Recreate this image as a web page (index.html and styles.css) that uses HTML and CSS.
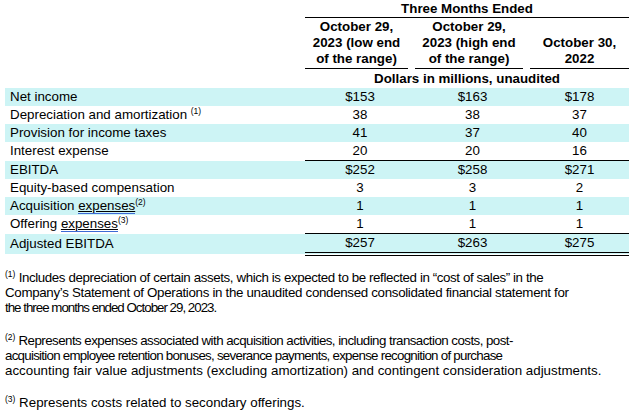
FILE: index.html
```html
<!DOCTYPE html>
<html>
<head>
<meta charset="utf-8">
<link rel="stylesheet" href="styles.css">
</head>
<body>
<table class="fin">
  <colgroup>
    <col class="w-label">
    <col class="w-c1">
    <col class="w-gap">
    <col class="w-c2">
    <col class="w-gap">
    <col class="w-c3">
  </colgroup>
  <thead>
    <tr class="h-top">
      <td></td>
      <th colspan="5" class="ruled">Three Months Ended</th>
    </tr>
    <tr class="h-cols">
      <td></td>
      <th class="ruled">October 29,<br>2023 (low end<br>of the range)</th>
      <td></td>
      <th class="ruled">October 29,<br>2023 (high end<br>of the range)</th>
      <td></td>
      <th class="ruled">October 30,<br>2022</th>
    </tr>
    <tr class="h-unit">
      <td></td>
      <th colspan="5">Dollars in millions, unaudited</th>
    </tr>
  </thead>
  <tbody>
    <tr class="shade">
      <td class="lbl">Net income</td>
      <td colspan="2" class="num">$153</td>
      <td colspan="2" class="num">$163</td>
      <td class="num">$178</td>
    </tr>
    <tr>
      <td class="lbl">Depreciation and amortization <sup class="fn">(1)</sup></td>
      <td colspan="2" class="num">38</td>
      <td colspan="2" class="num">38</td>
      <td class="num">37</td>
    </tr>
    <tr class="shade">
      <td class="lbl">Provision for income taxes</td>
      <td colspan="2" class="num">41</td>
      <td colspan="2" class="num">37</td>
      <td class="num">40</td>
    </tr>
    <tr class="sub-rule">
      <td class="lbl">Interest expense</td>
      <td colspan="2" class="num">20</td>
      <td colspan="2" class="num">20</td>
      <td class="num">16</td>
    </tr>
    <tr class="shade">
      <td class="lbl">EBITDA</td>
      <td colspan="2" class="num">$252</td>
      <td colspan="2" class="num">$258</td>
      <td class="num">$271</td>
    </tr>
    <tr>
      <td class="lbl">Equity-based compensation</td>
      <td colspan="2" class="num">3</td>
      <td colspan="2" class="num">3</td>
      <td class="num">2</td>
    </tr>
    <tr class="shade">
      <td class="lbl">Acquisition <span class="flag">expenses</span><sup class="fn">(2)</sup></td>
      <td colspan="2" class="num">1</td>
      <td colspan="2" class="num">1</td>
      <td class="num">1</td>
    </tr>
    <tr class="sub-rule">
      <td class="lbl">Offering <span class="flag">expenses</span><sup class="fn">(3)</sup></td>
      <td colspan="2" class="num">1</td>
      <td colspan="2" class="num">1</td>
      <td class="num">1</td>
    </tr>
    <tr class="shade total">
      <td class="lbl">Adjusted EBITDA</td>
      <td colspan="2" class="num">$257</td>
      <td colspan="2" class="num">$263</td>
      <td class="num">$275</td>
    </tr>
  </tbody>
</table>

<div class="notes">
  <p class="note-1"><span class="ls-1a"><sup class="nfn">(1)</sup> Includes depreciation of certain assets, which is expected to be reflected in “cost of sales” in the</span><br><span class="ls-1b">Company’s Statement of Operations in the unaudited condensed consolidated financial statement for</span><br><span class="ls-1c">the three months ended October 29, 2023.</span></p>
  <p class="note-2"><span class="ls-2a"><sup class="nfn">(2)</sup> Represents expenses associated with acquisition activities, including transaction costs, post-</span><br><span class="ls-2b">acquisition employee retention bonuses, severance payments, expense recognition of purchase</span><br>accounting fair value adjustments (excluding amortization) and contingent consideration adjustments.</p>
  <p class="note-3"><sup class="nfn">(3)</sup> Represents costs related to secondary offerings.</p>
</div>
</body>
</html>
```

FILE: styles.css
```css
html, body {
  margin: 0;
  padding: 0;
  background: #ffffff;
}

body {
  font-family: "Liberation Sans", Arial, sans-serif;
  font-size: 13.33px;
  color: #000000;
}

.fin {
  border-collapse: collapse;
  table-layout: fixed;
  width: 624px;
  margin: 0 0 0 5px;
}

.w-label { width: 300px; }
.w-c1 { width: 103px; }
.w-gap { width: 7px; }
.w-c2 { width: 108px; }
.w-c3 { width: 99px; }

.fin th,
.fin td {
  padding: 0;
  font-weight: normal;
  white-space: nowrap;
}

.fin th {
  font-weight: bold;
  text-align: center;
}

.ruled {
  border-bottom: 1px solid #000000;
}

.h-top th {
  height: 17px;
  line-height: 17px;
  vertical-align: middle;
}

.h-cols th {
  height: 49px;
  line-height: 16px;
  vertical-align: bottom;
  padding-bottom: 1px;
}

.h-unit th {
  height: 19px;
  line-height: 19px;
  vertical-align: middle;
}

.fin tbody td {
  height: 18px;
  line-height: 18px;
  vertical-align: middle;
}

.shade td {
  background: #cdf4f5;
}

.fin .lbl {
  padding-left: 5px;
}

.num {
  text-align: center;
}

.sub-rule .num {
  border-bottom: 1px solid #000000;
}

.total .num {
  border-bottom: 4px double #000000;
}

.fn {
  font-size: 8.5px;
  line-height: 0;
  vertical-align: 5px;
}

.flag {
  text-decoration: underline;
  text-decoration-color: #000000;
  border-bottom: 1px solid #3d6ad6;
}

.notes {
  padding: 14px 5px 0 5px;
  font-size: 13.33px;
  line-height: 15px;
}

.notes p {
  margin: 0;
  white-space: nowrap;
}

.note-1 { margin-bottom: 18px !important; }
.note-2 { margin-bottom: 17px !important; }

.ls-1a { letter-spacing: -0.4px; }
.ls-1b { letter-spacing: -0.32px; }
.ls-1c { letter-spacing: -1px; }
.ls-2a { letter-spacing: -0.55px; }
.ls-2b { letter-spacing: -0.74px; }

.nfn {
  font-size: 8.5px;
  line-height: 0;
  vertical-align: 5px;
  letter-spacing: 0;
}
```
